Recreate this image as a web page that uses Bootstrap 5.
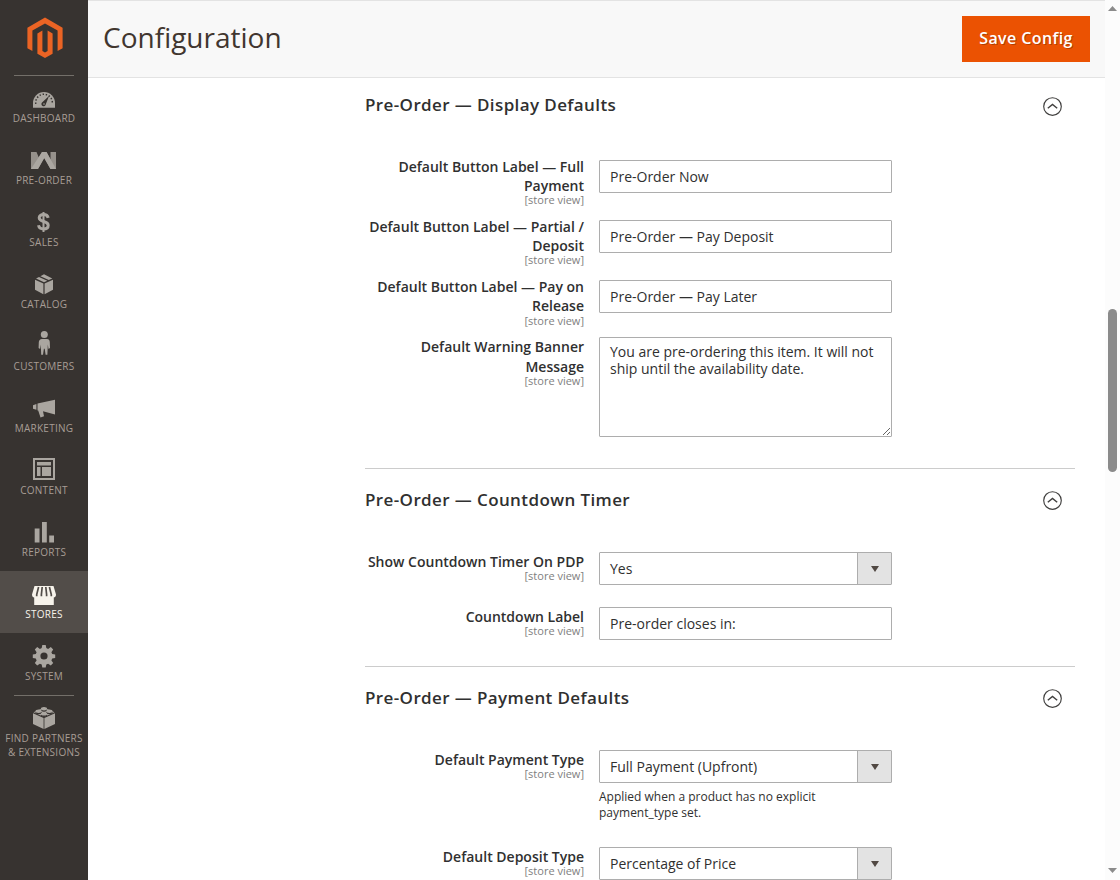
<!DOCTYPE html>
<html lang="en">
<head>
<meta charset="utf-8">
<meta name="viewport" content="width=device-width, initial-scale=1">
<title>Configuration</title>
<link href="https://cdn.jsdelivr.net/npm/bootstrap@5.3.0/dist/css/bootstrap.min.css" rel="stylesheet">
<style>
body{font-family:"Open Sans",sans-serif;font-size:14px;color:#303030;background:#fff}
.app{height:880px}
.side{width:88px;background:#373330}
.logo-box{height:75px;padding:17px 0 0 1px}
.rule{height:0;margin:0 14px -1px;border-top:1px solid #736f69}
.side-item{height:62px;padding-top:7px;color:#a79d95;font-size:10px;line-height:14px;letter-spacing:.25px;white-space:nowrap;text-decoration:none;text-transform:uppercase}
.side-item svg{width:36px;height:28px;margin-bottom:1px;flex:none;fill:#aaa6a0;stroke:none}
.side-item.active{background:#524d49;color:#f7f3eb}
.side-item.active svg{fill:#f7f3eb}
.page-top{height:78px;padding:0 15px;background:#f8f8f8;border-top:1px solid #e3e3e3;border-bottom:1px solid #e3e3e3}
.page-top h1{font-size:28px;line-height:36px;padding-bottom:4px;color:#41362f;font-weight:400}
.btn-save{width:128px;height:46px;background:#eb5202;color:#fff;font-size:16px;font-weight:600;letter-spacing:.4px;text-shadow:1px 1px 0 rgba(0,0,0,.25);line-height:1}
.btn-save span{display:block;padding-bottom:2px}
.btn-save:hover{background:#ba4000;color:#fff}
.config{padding:0 30px 0 277px}
.group{border-bottom:1px solid #ccc}
.group-head{height:62px;padding-right:13px}
.group-head svg{margin-top:2px}
.group-head h2{font-size:17px;line-height:24px;font-weight:600;letter-spacing:.39px}
.group.first .group-head{height:54px}
.group-body{padding-top:21px}
.first .group-body{padding-top:25px}
.cfg-row{height:55px;gap:15px}
.cfg-label{width:219px;text-align:right;font-weight:600;line-height:19.1px}
.scope{display:block;font-size:11px;font-weight:400;line-height:10px;margin-top:.15px;color:#808080}
.field{width:293px}
.tall{height:60.15px}
.tall .field{padding-top:3px}
.message-row{height:130.5px}
.last-row{height:59px}
.noted{height:97px}
.form-control{border:1px solid #adadad;border-radius:1px;color:#303030;font-size:14px;padding:0 10px;height:33px;line-height:19px}
textarea.form-control{height:100px;padding:5px 10px;line-height:17px;resize:both}
.pick{height:33px;border:1px solid #adadad;border-radius:1px;padding-left:10px}
.pick-arrow{width:34px;padding-top:1px;background:#e3e3e3;border-left:1px solid #adadad}
.note{font-size:12px;line-height:16px;margin-top:6px}
.scroll{width:15px;background:#fcfcfc}
.thumb{width:9px;height:163px;margin:297px 0 auto;border-radius:5px;background:#8b8b8b}
</style>
</head>
<body>
<div class="app d-flex overflow-hidden">
  <nav class="side flex-shrink-0 d-flex flex-column">
    <div class="logo-box text-center">
      <svg class="d-block mx-auto" width="36" height="41" viewBox="0 0 36 41" fill="#eb6424"><path d="M18 .6 35.6 10.700v20.500l-5 2.900V13.600L18 6.400 5.400 13.600v20.500l-5-2.900V10.700z"/><path d="m10.400 16.400 5-2.900v20.400l2.600 1.500 2.600-1.500V13.500l5 2.900v20.400L18 40.900l-7.600-4.100z"/></svg>
    </div>
    <div class="rule"></div>
    <a class="side-item d-flex flex-column align-items-center" href="#"><svg viewBox="0 0 36 28"><path d="M7 25.800V21a11 11 0 0 1 22 0v4.800z"/><path d="M9.800 21.800a8.300 8.300 0 1 1 16.400 0" fill="none" stroke="#373330" stroke-width="1.500" stroke-dasharray="1.400 1.800"/><path d="m23 14-3.200 8.200a2.200 2.200 0 1 1-3.500-1.900z" fill="#373330"/><circle cx="18" cy="22" r=".8"/></svg>Dashboard</a>
    <a class="side-item d-flex flex-column align-items-center" href="#"><svg viewBox="0 0 36 28"><path d="M5 8h5.500l2.300 5.500L16 8h4.500l4 7.500V8H30v17h-5.500l-6.300-11L12 25H5z" fill="#96918b"/><path d="M5 25 16 8h4.500L30 25h-5.500l-6.300-11L12 25z" fill="#aba7a1"/></svg>Pre-Order</a>
    <a class="side-item d-flex flex-column align-items-center" href="#"><svg viewBox="0 0 36 28"><path d="M22.200 11.800C21.700 9.700 20.200 8.600 17.500 8.600c-2.600 0-4.300 1.200-4.300 3.200 0 5 9 2.500 9 7.500 0 2.200-1.800 3.700-4.700 3.700-2.800 0-4.500-1.300-5-3.700" fill="none" stroke="#aaa6a0" stroke-width="3"/><path d="M16.500 6h2v20h-2z"/></svg>Sales</a>
    <a class="side-item d-flex flex-column align-items-center" href="#"><svg viewBox="0 0 36 28"><path d="m9 11.800 8.400 3.600v10.800L9 21.800zM27 11.800l-8.400 3.600v10.800l8.400-4.400zM10 10.400l3-1.500 8.300 3.900-3.300 1.500zM14.400 8.200 18 6.200l8.300 4.200-3.500 1.700z"/></svg>Catalog</a>
    <a class="side-item d-flex flex-column align-items-center" href="#"><svg viewBox="0 0 36 28"><circle cx="18.300" cy="4.600" r="3.500"/><path d="M16 9h5c2 0 2.700 1.400 2.800 3.200l.2 5.800-1.500 1-.7-4.500-.4 10.300H19.600l-.9-6h-.8l-.9 6h-1.800l-.4-10.300-.7 4.500-1.500-1 .2-5.800C12.900 10.400 14 9 16 9z"/></svg>Customers</a>
    <a class="side-item d-flex flex-column align-items-center" href="#"><svg viewBox="0 0 36 28"><path d="M29 7.800v14.700l-12-3.300 1 5-3.500 1.300-2.300-6.900h-.7v-7.100zM10.400 12v5.800L7 16.800v-3.600z"/></svg>Marketing</a>
    <a class="side-item d-flex flex-column align-items-center" href="#"><svg viewBox="0 0 36 28"><path fill-rule="evenodd" d="M7 4h22v22H7zM9 6v18h18V6zM11 8h14v3.500H11zM11 13h3.500v9H11zM16 13h9v9h-9z"/></svg>Content</a>
    <a class="side-item d-flex flex-column align-items-center" href="#"><svg viewBox="0 0 36 28"><path d="M8.700 12.500h4.800v14H8.700zM16 6h4.800v20.500H16zM23.200 19.500H28v7h-4.800z"/></svg>Reports</a>
    <a class="side-item active d-flex flex-column align-items-center" href="#"><svg viewBox="0 0 36 28"><path d="M8.500 8h19L30 16.500c0 2.200-1.200 3-2.200 3V27H8.200v-7.500C7 19.500 6 18.500 6 16.500z"/><path d="m12.600 9-1.900 7.500v1.700M16.200 9l-.8 7.500v1.700M19.800 9l.8 7.500v1.700M23.400 9l1.900 7.500v1.700" fill="none" stroke="#524d49" stroke-width="1.700"/></svg>Stores</a>
    <a class="side-item d-flex flex-column align-items-center" href="#"><svg viewBox="0 0 36 28"><path fill-rule="evenodd" d="m16.300 5h3.400l.6 3.100 1.800.8 2.700-1.800 2.400 2.400-1.800 2.700.8 1.800 3 .6v3.400l-3 .6-.8 1.800 1.800 2.700-2.400 2.400-2.700-1.800-1.800.8-.6 3h-3.400l-.6-3-1.800-.8-2.700 1.800-2.400-2.400 1.800-2.700-.8-1.800-3-.6v-3.400l3-.6.8-1.800-1.800-2.700 2.400-2.400 2.700 1.800 1.800-.8zM18 12.400a3.600 3.600 0 1 0 0 7.200 3.600 3.600 0 0 0 0-7.200z"/></svg>System</a>
    <div class="rule"></div>
    <a class="side-item d-flex flex-column align-items-center text-center" href="#"><svg viewBox="0 0 36 28"><path d="M7 11.200 17.600 16v11L7 22zM29 11.200 18.400 16v11L29 22zM7.500 10.300 18 5.500l10.500 4.800L18 15z"/><g fill="#373330"><ellipse cx="18" cy="8" rx="3.200" ry="1.700"/><ellipse cx="12.600" cy="10.600" rx="3.200" ry="1.700"/><ellipse cx="23.400" cy="10.600" rx="3.200" ry="1.700"/><ellipse cx="18" cy="13.200" rx="3.200" ry="1.700"/></g><ellipse cx="18" cy="6.700" rx="3.100" ry="1.700"/><ellipse cx="12.600" cy="9.300" rx="3.100" ry="1.700"/><ellipse cx="23.400" cy="9.300" rx="3.100" ry="1.700"/><ellipse cx="18" cy="11.900" rx="3.100" ry="1.700"/></svg>Find Partners<br>&amp; Extensions</a>
  </nav>

  <main class="flex-grow-1 overflow-hidden">
    <header class="page-top d-flex align-items-center justify-content-between">
      <h1 class="mb-0">Configuration</h1>
      <button class="btn btn-save rounded-0 border-0 p-0" type="button"><span>Save Config</span></button>
    </header>
    <div class="config">
      <section class="group first">
        <div class="group-head d-flex align-items-center justify-content-between">
          <h2 class="mb-0">Pre-Order — Display Defaults</h2>
          <svg width="19" height="19" viewBox="0 0 19 19" fill="none" stroke="#41403f" stroke-width="1.150"><circle cx="9.500" cy="9.500" r="8.800"/><path d="m4.800 11.300 4.700-3.900 4.700 3.900" stroke-width="1.400"/></svg>
        </div>
        <div class="group-body">
          <div class="cfg-row tall d-flex">
            <label class="cfg-label" for="f1">Default Button Label — Full Payment<span class="scope">[store view]</span></label>
            <div class="field"><input id="f1" class="form-control" value="Pre-Order Now"></div>
          </div>
          <div class="cfg-row tall d-flex">
            <label class="cfg-label" for="f2">Default Button Label — Partial / Deposit<span class="scope">[store view]</span></label>
            <div class="field"><input id="f2" class="form-control" value="Pre-Order — Pay Deposit"></div>
          </div>
          <div class="cfg-row tall d-flex">
            <label class="cfg-label" for="f3">Default Button Label — Pay on Release<span class="scope">[store view]</span></label>
            <div class="field"><input id="f3" class="form-control" value="Pre-Order — Pay Later"></div>
          </div>
          <div class="cfg-row d-flex message-row">
            <label class="cfg-label" for="f4">Default Warning Banner Message<span class="scope">[store view]</span></label>
            <div class="field"><textarea id="f4" class="form-control">You are pre-ordering this item. It will not ship until the availability date.</textarea></div>
          </div>
        </div>
      </section>
      <section class="group">
        <div class="group-head d-flex align-items-center justify-content-between">
          <h2 class="mb-0">Pre-Order — Countdown Timer</h2>
          <svg width="19" height="19" viewBox="0 0 19 19" fill="none" stroke="#41403f" stroke-width="1.150"><circle cx="9.500" cy="9.500" r="8.800"/><path d="m4.800 11.300 4.700-3.900 4.700 3.900" stroke-width="1.400"/></svg>
        </div>
        <div class="group-body">
          <div class="cfg-row d-flex">
            <div class="cfg-label">Show Countdown Timer On PDP<span class="scope">[store view]</span></div>
            <div class="field"><div class="pick d-flex align-items-center justify-content-between"><span>Yes</span><span class="pick-arrow h-100 d-flex align-items-center justify-content-center"><svg width="8" height="6" viewBox="0 0 8 6"><path d="M0 0h8L4 6z" fill="#514943"/></svg></span></div></div>
          </div>
          <div class="cfg-row d-flex last-row">
            <label class="cfg-label" for="f5">Countdown Label<span class="scope">[store view]</span></label>
            <div class="field"><input id="f5" class="form-control" value="Pre-order closes in:"></div>
          </div>
        </div>
      </section>
      <section class="group">
        <div class="group-head d-flex align-items-center justify-content-between">
          <h2 class="mb-0">Pre-Order — Payment Defaults</h2>
          <svg width="19" height="19" viewBox="0 0 19 19" fill="none" stroke="#41403f" stroke-width="1.150"><circle cx="9.500" cy="9.500" r="8.800"/><path d="m4.800 11.300 4.700-3.900 4.700 3.900" stroke-width="1.400"/></svg>
        </div>
        <div class="group-body">
          <div class="cfg-row noted d-flex">
            <div class="cfg-label">Default Payment Type<span class="scope">[store view]</span></div>
            <div class="field"><div class="pick d-flex align-items-center justify-content-between"><span>Full Payment (Upfront)</span><span class="pick-arrow h-100 d-flex align-items-center justify-content-center"><svg width="8" height="6" viewBox="0 0 8 6"><path d="M0 0h8L4 6z" fill="#514943"/></svg></span></div><div class="note">Applied when a product has no explicit payment_type set.</div></div>
          </div>
          <div class="cfg-row d-flex">
            <div class="cfg-label">Default Deposit Type<span class="scope">[store view]</span></div>
            <div class="field"><div class="pick d-flex align-items-center justify-content-between"><span>Percentage of Price</span><span class="pick-arrow h-100 d-flex align-items-center justify-content-center"><svg width="8" height="6" viewBox="0 0 8 6"><path d="M0 0h8L4 6z" fill="#514943"/></svg></span></div></div>
          </div>
        </div>
      </section>
    </div>
  </main>

  <aside class="scroll flex-shrink-0 d-flex flex-column align-items-center justify-content-between" aria-hidden="true">
    <svg class="mt-1" width="9" height="8" viewBox="0 0 9 8"><path d="M4.500 2 9 7H0z" fill="#8b8b8b"/></svg>
    <div class="thumb"></div>
    <svg class="mb-1" width="9" height="8" viewBox="0 0 9 8"><path d="M0 0h9L4.500 5z" fill="#8b8b8b"/></svg>
  </aside>
</div>
<script src="https://cdn.jsdelivr.net/npm/bootstrap@5.3.0/dist/js/bootstrap.bundle.min.js"></script>
</body>
</html>
